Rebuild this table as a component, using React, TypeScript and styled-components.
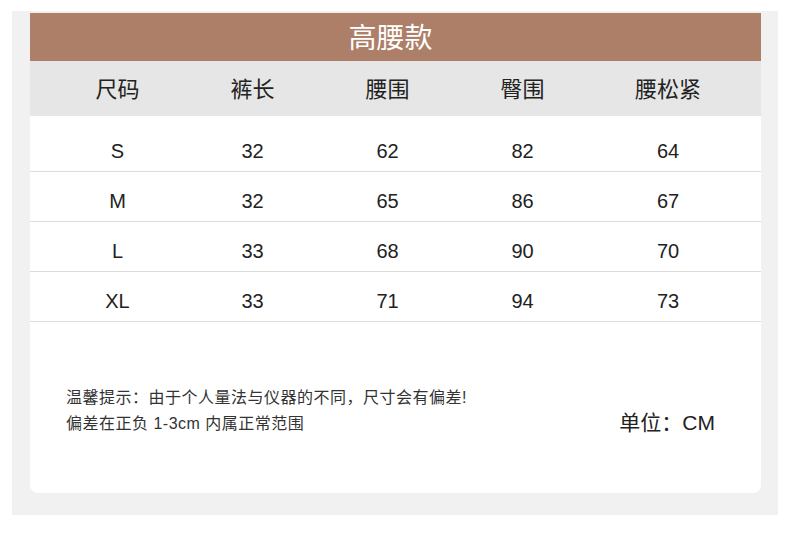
import React from 'react';
import styled, { createGlobalStyle } from 'styled-components';

const GlobalStyle = createGlobalStyle`
  html, body {
    margin: 0;
    padding: 0;
    background: #ffffff;
  }
  body {
    font-family: "Liberation Sans", "Noto Sans CJK SC", sans-serif;
    color: #222;
  }
`;

const Page = styled.div`
  width: 790px;
  height: 540px;
  padding: 11px 12px 0 12px;
  box-sizing: border-box;
`;

const Panel = styled.div`
  background: #f1f1f1;
  height: 504px;
  padding: 2px 17px 22px 18px;
  box-sizing: border-box;
`;

const Card = styled.div`
  background: #ffffff;
  height: 100%;
  border-radius: 0 0 8px 8px;
  display: flex;
  flex-direction: column;
  overflow: hidden;
`;

const Title = styled.div`
  background: #ad7f68;
  height: 48px;
  display: flex;
  align-items: center;
  justify-content: center;
  color: #ffffff;
  font-family: "Noto Sans CJK SC", sans-serif;
  font-size: 28px;
  padding-right: 10px;
  padding-bottom: 2px;
  box-sizing: border-box;
`;

const Row = styled.div<{ $head?: boolean }>`
  display: grid;
  grid-template-columns: 135px 135px 135px 135px 156px;
  padding-left: 20px;
  height: ${(p) => (p.$head ? '55px' : '50px')};
  align-items: ${(p) => (p.$head ? 'center' : 'start')};
  box-sizing: border-box;
  background: ${(p) => (p.$head ? '#e6e6e6' : 'transparent')};
  border-bottom: ${(p) => (p.$head ? 'none' : '1px solid #dcdcdc')};
`;

const Body = styled.div`
  padding-top: 6px;
`;

const Cell = styled.div<{ $head?: boolean }>`
  text-align: center;
  font-family: ${(p) =>
    p.$head ? '"Noto Sans CJK SC", sans-serif' : '"Liberation Sans", "Noto Sans CJK SC", sans-serif'};
  font-size: ${(p) => (p.$head ? '22px' : '20px')};
  line-height: 20px;
  padding-top: ${(p) => (p.$head ? '0' : '19px')};
  margin-bottom: ${(p) => (p.$head ? '4px' : '0')};
  color: #222;
`;

const Footer = styled.div`
  flex: 1;
  display: flex;
  align-items: flex-start;
  justify-content: space-between;
  padding: 63px 46px 0 36px;
`;

const Notes = styled.div`
  font-family: "Liberation Sans", "Noto Sans CJK SC", sans-serif;
  font-size: 16px;
  letter-spacing: 0.5px;
  line-height: 26px;
  color: #333;
`;

const Unit = styled.div`
  font-family: "Liberation Sans", "Noto Sans CJK SC", sans-serif;
  font-size: 21px;
  margin-top: 21px;
  color: #222;
`;

const headers = ['尺码', '裤长', '腰围', '臀围', '腰松紧'];

const rows = [
  ['S', '32', '62', '82', '64'],
  ['M', '32', '65', '86', '67'],
  ['L', '33', '68', '90', '70'],
  ['XL', '33', '71', '94', '73'],
];

const App: React.FC = () => {
  return (
    <Page>
      <GlobalStyle />
      <Panel>
        <Card>
          <Title>高腰款</Title>
          <Row $head>
            {headers.map((h) => (
              <Cell $head key={h}>
                {h}
              </Cell>
            ))}
          </Row>
          <Body>
            {rows.map((r) => (
              <Row key={r[0]}>
                {r.map((v, i) => (
                  <Cell key={i}>{v}</Cell>
                ))}
              </Row>
            ))}
          </Body>
          <Footer>
            <Notes>
              温馨提示：由于个人量法与仪器的不同，尺寸会有偏差!
              <br />
              偏差在正负 1-3cm 内属正常范围
            </Notes>
            <Unit>单位：CM</Unit>
          </Footer>
        </Card>
      </Panel>
    </Page>
  );
};

export default App;
